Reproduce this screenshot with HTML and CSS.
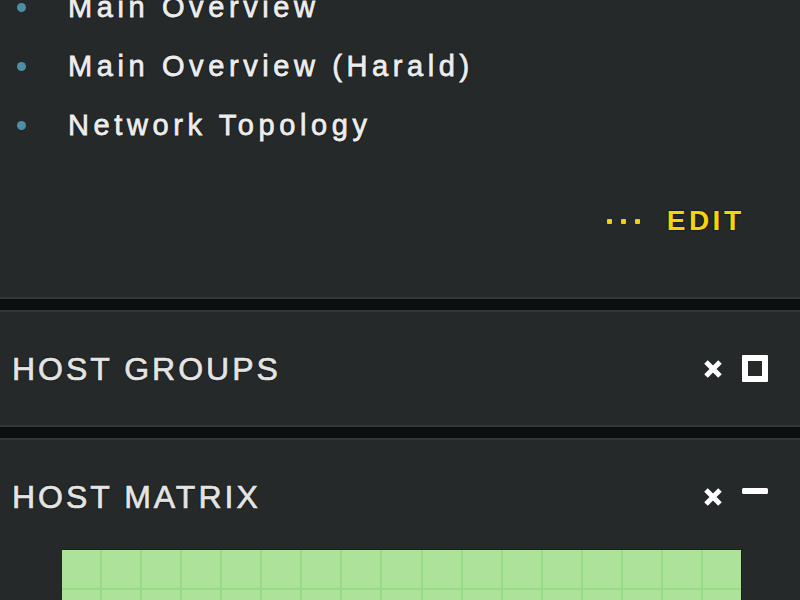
FILE: index.html
```html
<!DOCTYPE html>
<html lang="en">
<head>
<meta charset="utf-8">
<title>Sidebar</title>
<link rel="stylesheet" href="styles.css">
</head>
<body>
<div class="sidebar">
  <section class="snapin snapin-views">
    <ul class="view-list">
      <li class="view-item"><span class="bullet"></span><span class="view-link">Main Overview</span></li>
      <li class="view-item"><span class="bullet"></span><span class="view-link">Main Overview (Harald)</span></li>
      <li class="view-item"><span class="bullet"></span><span class="view-link">Network Topology</span></li>
    </ul>
    <div class="edit-row">
      <span class="more-dots"><i></i><i></i><i></i></span>
      <span class="edit-link">EDIT</span>
    </div>
  </section>
  <div class="divider"></div>
  <section class="snapin">
    <header class="snapin-head">
      <span class="snapin-title">HOST GROUPS</span>
      <span class="snapin-icons">
        <svg class="icon icon-close" viewBox="0 0 20 20" width="20" height="20"><path d="M3 3 L17 17 M17 3 L3 17"/></svg>
        <span class="icon-maximize"></span>
      </span>
    </header>
  </section>
  <div class="divider"></div>
  <section class="snapin">
    <header class="snapin-head">
      <span class="snapin-title">HOST MATRIX</span>
      <span class="snapin-icons">
        <svg class="icon icon-close" viewBox="0 0 20 20" width="20" height="20"><path d="M3 3 L17 17 M17 3 L3 17"/></svg>
        <svg class="icon-minimize" viewBox="0 0 26 26" width="26" height="26"><rect x="0" y="4" width="26" height="6" rx="1.5"/></svg>
      </span>
    </header>
    <div class="matrix">
      <span></span><span></span><span></span><span></span><span></span><span></span><span></span><span></span><span></span><span></span><span></span><span></span><span></span><span></span><span></span><span></span><span></span>
      <span></span><span></span><span></span><span></span><span></span><span></span><span></span><span></span><span></span><span></span><span></span><span></span><span></span><span></span><span></span><span></span><span></span>
    </div>
  </section>
</div>
</body>
</html>
```
FILE: styles.css
```css
html, body {
  margin: 0;
  padding: 0;
  height: 100%;
  overflow: hidden;
  background: #25292a;
}

body {
  font-family: "Liberation Sans", Arial, sans-serif;
  color: #ececec;
}

.sidebar {
  width: 800px;
}

.snapin {
  background: #25292a;
  padding-bottom: 4px;
}

.snapin-views {
  padding-bottom: 47px;
}

.view-list {
  list-style: none;
  margin: -22px 0 0 0;
  padding: 0;
}

.view-item {
  display: flex;
  align-items: center;
  height: 59px;
  padding-left: 17px;
}

.bullet {
  width: 9px;
  height: 9px;
  border-radius: 50%;
  background: #4a8fa7;
  margin-right: 42px;
  flex: none;
}

.view-link {
  font-size: 29px;
  letter-spacing: 4.6px;
  line-height: 1;
  color: #ededed;
  -webkit-text-stroke: 0.8px #ededed;
  text-shadow: 0 0 1px #000, 0 0 2px #000;
}

.edit-row {
  display: flex;
  align-items: center;
  justify-content: flex-end;
  height: 58px;
  margin-top: 37px;
  padding-right: 59px;
}

.more-dots {
  display: flex;
  gap: 9px;
  margin-right: 27px;
}

.more-dots i {
  display: block;
  width: 5px;
  height: 5px;
  border-radius: 1px;
  background: #f2d00e;
}

.edit-link {
  font-size: 28px;
  font-weight: bold;
  letter-spacing: 3.5px;
  line-height: 1;
  color: #f6d40c;
  text-shadow: 0 0 2px #000;
  margin-right: -3.5px;
}

.divider {
  height: 11px;
  background: #0c0e0f;
  border-top: 2px solid #30373a;
  border-bottom: 2px solid #30373a;
}

.snapin-head {
  box-sizing: border-box;
  height: 109px;
  padding: 4px 32px 0 12px;
  display: flex;
  align-items: center;
  justify-content: space-between;
}

.snapin-title {
  font-size: 32px;
  letter-spacing: 3px;
  line-height: 1;
  color: #e4e4e4;
  -webkit-text-stroke: 0.7px #e4e4e4;
  text-shadow: 0 0 1px #000, 0 0 2px #000;
}

.snapin-icons {
  display: flex;
  align-items: center;
  gap: 19px;
}

.icon-close {
  display: block;
}

.icon-close path {
  stroke: #ffffff;
  stroke-width: 5;
  fill: none;
}

.icon-maximize {
  display: block;
  box-sizing: border-box;
  width: 26px;
  height: 27px;
  border: 6px solid #ffffff;
  border-radius: 1px;
}

.icon-minimize {
  display: block;
}

.icon-minimize rect {
  fill: #ffffff;
}

.matrix {
  margin-left: 62px;
  width: 679px;
  display: grid;
  grid-template-columns: repeat(17, 1fr);
  grid-auto-rows: 38px;
  gap: 2px;
  background: #98db86;
  border-top: 1px solid #1b1f20;
  box-shadow: 1px 0 0 #1b1f20;
}

.matrix span {
  background: #ade29b;
}
```
